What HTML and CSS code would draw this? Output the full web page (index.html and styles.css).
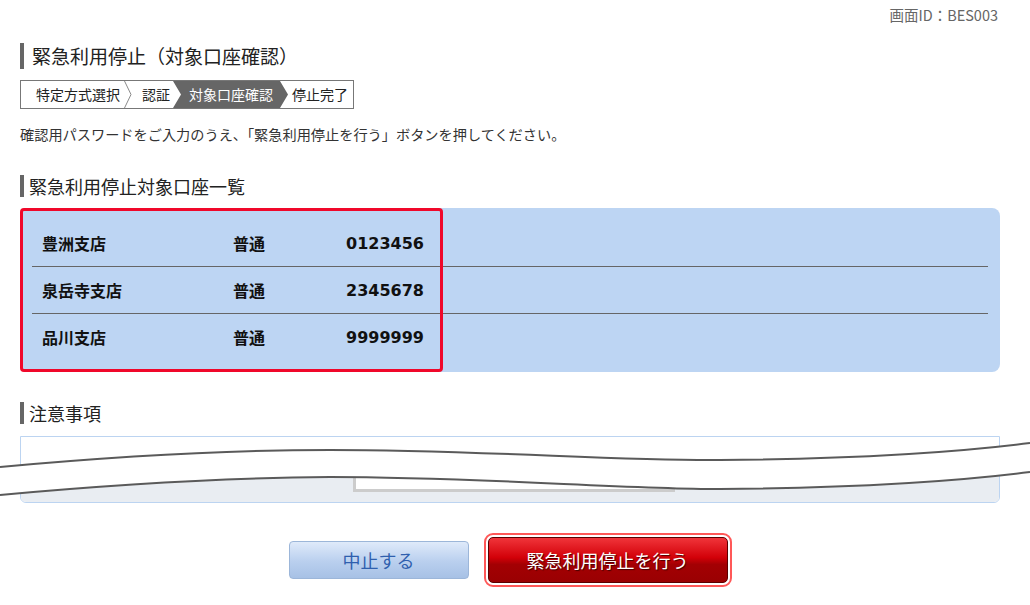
FILE: index.html
```html
<!DOCTYPE html>
<html lang="ja">
<head>
    <meta charset="UTF-8">
    <meta name="viewport" content="width=device-width, initial-scale=1.0">
    <title>緊急利用停止（対象口座確認）</title>
    <link rel="stylesheet" href="styles.css">
</head>
<body>
    <div class="page">
        <p class="screen-id">画面ID：BES003</p>

        <h1 class="page-title">緊急利用停止（対象口座確認）</h1>

        <ol class="steps">
            <li class="step step-first">特定方式選択</li>
            <li class="step-sep">
                <svg width="8" height="27" viewBox="0 0 8 27"><polyline points="0.5,0 7,13.5 0.5,27" fill="none" stroke="#8a8a8a" stroke-width="1"/></svg>
            </li>
            <li class="step step-auth">認証</li>
            <li class="step step-current">対象口座確認</li>
            <li class="step step-last">停止完了</li>
        </ol>

        <p class="lead">確認用パスワードをご入力のうえ、「緊急利用停止を行う」ボタンを押してください。</p>

        <h2 class="section-title">緊急利用停止対象口座一覧</h2>
        <div class="account-box">
            <div class="account-list">
                <div class="account-row">
                    <span>豊洲支店</span><span>普通</span><span class="num">0123456</span>
                </div>
                <div class="account-row">
                    <span>泉岳寺支店</span><span>普通</span><span class="num">2345678</span>
                </div>
                <div class="account-row">
                    <span>品川支店</span><span>普通</span><span class="num">9999999</span>
                </div>
            </div>
            <div class="highlight"></div>
        </div>

        <h2 class="section-title notes-title">注意事項</h2>
        <div class="notes-wrap">
            <div class="notes">
                <div class="notes-top"></div>
                <div class="notes-bottom">
                    <div class="notes-inner"></div>
                </div>
            </div>
            <!-- omitted part -->
            <svg class="tear" width="1030" height="70" viewBox="0 436 1030 70">
                <path d="M0 467 C120 456 220 450 330 450 C480 450 620 461 720 460 C850 459 960 452 1030 443 L1030 472 C960 481 850 488 720 489 C620 490 480 477 330 477 C220 477 120 484 0 495 Z" fill="#fff"/>
                <path d="M0 467 C120 456 220 450 330 450 C480 450 620 461 720 460 C850 459 960 452 1030 443" fill="none" stroke="#5a5a5a" stroke-width="2"/>
                <path d="M0 495 C120 484 220 478 330 477 C480 477 620 489 720 489 C850 488 960 481 1030 472" fill="none" stroke="#5a5a5a" stroke-width="2"/>
            </svg>
        </div>

        <div class="actions">
            <button type="button" class="btn btn-cancel">中止する</button>
            <span class="btn-ring">
                <button type="submit" class="btn btn-stop">緊急利用停止を行う</button>
            </span>
        </div>
    </div>
</body>
</html>
```

FILE: styles.css
```css
body, html {
    margin: 0;
    background: #fff;
    font-family: "Noto Sans CJK JP", sans-serif;
    color: #222;
}

.page {
    padding: 0 30px 0 20px;
}

.screen-id {
    margin: 0;
    padding: 5px 2px 0 0;
    text-align: right;
    font-size: 14.5px;
    line-height: 20px;
    color: #666;
}

.page-title {
    margin: 18px 0 0;
    border-left: 4px solid #666;
    padding-left: 8px;
    font-size: 19px;
    font-weight: normal;
    line-height: 26px;
    height: 26px;
}

/* step bar */
.steps {
    display: flex;
    width: fit-content;
    list-style: none;
    margin: 11px 0 0;
    padding: 0;
    border: 1px solid #777;
    height: 27px;
    font-size: 14px;
    line-height: 27px;
    color: #222;
}

.step-first {
    padding: 0 2px 0 15px;
}

.step-sep {
    display: flex;
    margin-left: 2px;
}

.step-auth {
    padding: 0 3px 0 10px;
}

.step-current {
    background: #666;
    color: #fff;
    padding: 0 15px 0 16px;
    clip-path: polygon(0 0, calc(100% - 8px) 0, 100% 50%, calc(100% - 8px) 100%, 0 100%, 8px 50%);
}

.step-last {
    padding: 0 5px 0 4px;
}

.lead {
    margin: 15px 0 0;
    font-size: 14.2px;
    line-height: 20px;
    color: #333;
}

.section-title {
    margin: 31px 0 0;
    border-left: 4px solid #666;
    padding-left: 5px;
    font-size: 18px;
    font-weight: normal;
    line-height: 22px;
    height: 22px;
}

/* account list */
.account-box {
    position: relative;
    margin-top: 11px;
    background: #bdd5f3;
    border-radius: 8px;
    padding: 12px 12px 12px;
}

.account-row {
    display: grid;
    grid-template-columns: 191px 80px 111px;
    align-items: center;
    height: 46px;
    padding-left: 10px;
    border-bottom: 1px solid #666;
    font-family: "DejaVu Sans", "Noto Sans CJK JP", sans-serif;
    font-weight: bold;
    font-size: 16px;
    color: #111;
}

.account-row:last-child {
    border-bottom: none;
}

.account-row .num {
    text-align: right;
}

.highlight {
    position: absolute;
    left: 0;
    top: 0;
    bottom: 0;
    width: 417px;
    border: 3px solid #f0082a;
    border-radius: 4px;
}

/* notes */
.notes-title {
    margin-top: 30px;
}

.notes-wrap {
    position: relative;
    margin-top: 12px;
}

.notes {
    border: 1px solid #bcd4f1;
    border-radius: 0 0 6px 6px;
}

.notes-top {
    height: 30px;
    background: #fff;
}

.notes-bottom {
    height: 25px;
    padding: 0 0 10px 332px;
    background: #e9edf2;
    border-radius: 0 0 5px 5px;
}

.notes-inner {
    width: 319px;
    height: 22px;
    background: #fff;
    border-left: 3px solid #ccc;
    border-bottom: 3px solid #ccc;
}

.tear {
    position: absolute;
    left: -20px;
    top: 0;
    overflow: visible;
}

/* buttons */
.actions {
    display: flex;
    justify-content: center;
    align-items: center;
    gap: 15px;
    margin-top: 30px;
}

.btn {
    font-family: "Noto Sans CJK JP", sans-serif;
    font-size: 18px;
    cursor: pointer;
}

.btn-cancel {
    width: 180px;
    height: 38px;
    border: 1px solid #9cb6d9;
    border-radius: 4px;
    background: linear-gradient(#dfeafa, #b9cfee 55%, #a7c1e5);
    color: #2f5fae;
}

.btn-ring {
    display: inline-flex;
    padding: 2px;
    border: 2px solid #ff5858;
    border-radius: 9px;
}

.btn-stop {
    width: 240px;
    height: 46px;
    border: 1px solid #5a0000;
    border-radius: 5px;
    background: linear-gradient(#f0343a, #d20008 45%, #a30003 60%, #9a0002);
    color: #fff;
    text-shadow: 1px 1px 1px #400;
}
```
